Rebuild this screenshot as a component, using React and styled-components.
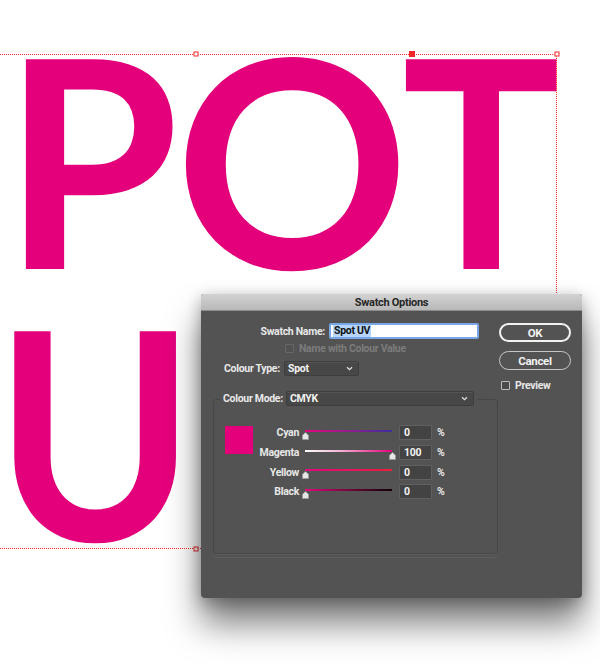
import React from 'react';
import styled, { createGlobalStyle } from 'styled-components';

const MAGENTA = '#e4007b';
const PANEL = '#535353';

const GlobalStyle = createGlobalStyle`
  html, body {
    margin: 0;
    padding: 0;
    background: #ffffff;
  }
  body {
    width: 600px;
    height: 666px;
    overflow: hidden;
  }
`;

const Canvas = styled.div`
  position: relative;
  width: 600px;
  height: 666px;
  overflow: hidden;
  background: #ffffff;
`;

// the artwork text on the page
const Artwork = styled.div`
  padding-top: 21px;
  font-family: Lato, 'Open Sans', sans-serif;
  font-weight: 700;
  font-size: 290px;
  line-height: 272px;
  color: ${MAGENTA};
  white-space: nowrap;
`;

const Line = styled.div`
  display: flex;
`;

const Glyph = styled.span`
  display: inline-block;
  width: ${p => p.$w}px;
  margin-left: ${p => p.$x || 0}px;
  transform: scaleX(${p => p.$sx || 1});
  transform-origin: left center;
`;

// selection frame of the text frame
const Frame = styled.div`
  position: absolute;
  top: 54px;
  left: -165px;
  width: 722px;
  height: 495px;
  border: 1px dotted #ff2a2a;
  box-sizing: border-box;
  pointer-events: none;
`;

const Handle = styled.span`
  position: absolute;
  left: ${p => p.$x}px;
  top: ${p => p.$y}px;
  width: ${p => (p.$filled ? 6 : 5)}px;
  height: ${p => (p.$filled ? 6 : 5)}px;
  transform: translate(-50%, -50%);
  box-sizing: border-box;
  border: 1px solid #f0262b;
  background: ${p => (p.$filled ? '#f0262b' : '#ffffff')};
`;

/* dialog */

const Dialog = styled.div`
  position: absolute;
  left: 201px;
  top: 294px;
  width: 381px;
  height: 304px;
  background: ${PANEL};
  border-radius: 3px 3px 4px 4px;
  box-shadow: 0 26px 34px rgba(0, 0, 0, 0.5), 0 4px 16px rgba(0, 0, 0, 0.3);
  font-family: Roboto, 'Liberation Sans', sans-serif;
  font-weight: 700;
  font-size: 10.5px;
  letter-spacing: -0.3px;
  color: #e8e8e8;
  overflow: hidden;
`;

const TitleBar = styled.div`
  height: 17px;
  box-sizing: border-box;
  display: flex;
  align-items: center;
  justify-content: center;
  background: linear-gradient(#d3d3d3, #b8b8b8);
  border-bottom: 1px solid #8c8c8c;
  color: #262626;
  font-size: 11px;
  padding-top: 1px;
`;

const Body = styled.div`
  display: flex;
`;

const Main = styled.div`
  width: 298px;
  display: flex;
  flex-direction: column;
`;

const Side = styled.div`
  display: flex;
  flex-direction: column;
  padding-top: 12px;
`;

const Row = styled.div`
  display: flex;
  align-items: center;
  margin-top: ${p => p.$top || 0}px;
  padding-left: ${p => p.$left || 0}px;
  height: ${p => p.$h || 16}px;
`;

const Label = styled.span`
  width: ${p => p.$w}px;
  text-align: ${p => (p.$right ? 'right' : 'left')};
  margin-right: ${p => p.$gap || 0}px;
  flex-shrink: 0;
  white-space: nowrap;
`;

const NameInput = styled.div`
  width: 150px;
  height: 16px;
  box-sizing: border-box;
  border: 2px solid #78a6e6;
  border-radius: 2px;
  background: #ffffff;
  display: flex;
  align-items: center;
  padding-left: 2px;
  color: #111111;
`;

const Selected = styled.span`
  background: #b5d5fd;
  line-height: 12px;
  padding: 0 1px;
`;

const Check = styled.span`
  width: 9px;
  height: 9px;
  box-sizing: border-box;
  border: 1px solid ${p => (p.$dim ? '#676767' : '#bdbdbd')};
  background: ${p => (p.$dim ? '#525252' : '#4a4a4a')};
  border-radius: 1px;
  margin-right: 5px;
  flex-shrink: 0;
`;

const Muted = styled.span`
  color: #7c7c7c;
`;

const Select = styled.div`
  width: ${p => p.$w}px;
  height: 15px;
  box-sizing: border-box;
  display: flex;
  align-items: center;
  justify-content: space-between;
  padding: 0 5px 0 3px;
  background: #474747;
  border: 1px solid #3d3d3d;
  border-radius: 2px;
  box-shadow: inset 0 1px 0 #545454;
  color: #f2f2f2;
`;

const Group = styled.div`
  margin: 23px 0 0 12px;
  width: 285px;
  height: 155px;
  box-sizing: border-box;
  border: 1px solid #474747;
  border-radius: 3px;
  box-shadow: 0 1px 0 #5a5a5a;
  display: flex;
  flex-direction: column;
`;

const ModeRow = styled.div`
  display: flex;
  align-items: center;
  align-self: flex-start;
  height: 15px;
  margin: -9px 0 0 6px;
  padding: 0 3px;
  background: ${PANEL};
`;

const Divider = styled.div`
  margin: 3px 0 0 14px;
  width: 281px;
  height: 1px;
  background: #5d5d5d;
`;

const MixArea = styled.div`
  display: flex;
  margin-top: 17px;
`;

const Swatch = styled.div`
  width: 28px;
  height: 28px;
  margin: 3px 0 0 11px;
  background: ${MAGENTA};
  flex-shrink: 0;
`;

const Sliders = styled.div`
  display: flex;
  flex-direction: column;
`;

const SliderRow = styled.div`
  display: flex;
  align-items: center;
  height: 19.7px;
`;

const Track = styled.div`
  position: relative;
  width: 87px;
  height: 100%;
  margin-left: 6px;
`;

const Bar = styled.div`
  position: absolute;
  left: 0;
  right: 0;
  top: 7px;
  height: 2px;
  background: ${p => p.$fill};
`;

const Thumb = styled.svg`
  position: absolute;
  top: 9px;
  margin-left: -3.5px;
`;

const Field = styled.div`
  width: 33px;
  height: 15px;
  box-sizing: border-box;
  margin-left: 7px;
  padding-left: 4px;
  display: flex;
  align-items: center;
  background: #434343;
  border: 1px solid #606060;
  border-radius: 1px;
  color: #f4f4f4;
`;

const Percent = styled.span`
  margin-left: 5px;
`;

const Button = styled.div`
  width: 72px;
  height: 19px;
  box-sizing: border-box;
  display: flex;
  align-items: center;
  justify-content: center;
  margin-top: ${p => p.$top || 0}px;
  border: ${p => (p.$default ? '2px solid #f2f2f2' : '1.5px solid #c6c6c6')};
  border-radius: 10px;
  color: #f2f2f2;
  font-size: 11.5px;
`;

const PreviewRow = styled.div`
  display: flex;
  align-items: center;
  margin: 9px 0 0 2px;
`;

const Chevron = () => (
  <svg width="7" height="5" viewBox="0 0 7 5">
    <path d="M1 1.2 L3.5 3.6 L6 1.2" fill="none" stroke="#e0e0e0" strokeWidth="1.3" />
  </svg>
);

const inks = [
  { name: 'Cyan', value: 0, fill: 'linear-gradient(90deg, #e5057f, #9a1a8c 45%, #3c2f9c)' },
  { name: 'Magenta', value: 100, fill: 'linear-gradient(90deg, #ffffff, #f3b5d5 40%, #e4007b)' },
  { name: 'Yellow', value: 0, fill: 'linear-gradient(90deg, #e5057f, #ea1d3d)' },
  { name: 'Black', value: 0, fill: 'linear-gradient(90deg, #e5057f, #6a0635 55%, #120008)' },
];

export default function App() {
  return (
    <Canvas>
      <GlobalStyle />
      <Artwork>
        <Line>
          <Glyph $w={172} $x={3} $sx={0.98}>P</Glyph>
          <Glyph $w={227}>O</Glyph>
          <Glyph $w={170} $sx={0.91}>T</Glyph>
        </Line>
        <Line>
          <Glyph $w={200} $x={-5} $sx={0.93}>U</Glyph>
        </Line>
      </Artwork>

      <Frame />
      <Handle $x={196} $y={54} />
      <Handle $x={412} $y={54} $filled />
      <Handle $x={557} $y={54} />
      <Handle $x={196} $y={549} />

      <Dialog>
        <TitleBar>Swatch Options</TitleBar>
        <Body>
          <Main>
            <Row $top={12}>
              <Label $w={124} $gap={4} $right>Swatch Name:</Label>
              <NameInput>
                <Selected>Spot UV</Selected>
              </NameInput>
            </Row>
            <Row $top={3} $left={84} $h={12}>
              <Check $dim />
              <Muted>Name with Colour Value</Muted>
            </Row>
            <Row $top={7} $left={23} $h={15}>
              <Label $w={60}>Colour Type:</Label>
              <Select $w={75}>
                <span>Spot</span>
                <Chevron />
              </Select>
            </Row>

            <Group>
              <ModeRow>
                <Label $w={60} $gap={3}>Colour Mode:</Label>
                <Select $w={188}>
                  <span>CMYK</span>
                  <Chevron />
                </Select>
              </ModeRow>
              <MixArea>
                <Swatch />
                <Sliders>
                  {inks.map(ink => (
                    <SliderRow key={ink.name}>
                      <Label $w={46} $right>{ink.name}</Label>
                      <Track>
                        <Bar $fill={ink.fill} />
                        <Thumb
                          width="7"
                          height="8"
                          viewBox="0 0 7 8"
                          style={{ left: `${ink.value}%` }}
                        >
                          <polygon
                            points="3.5,0.5 6.5,3.2 6.5,7.5 0.5,7.5 0.5,3.2"
                            fill="#e6e6e6"
                            stroke="#9a9a9a"
                            strokeWidth="0.8"
                          />
                        </Thumb>
                      </Track>
                      <Field>{ink.value}</Field>
                      <Percent>%</Percent>
                    </SliderRow>
                  ))}
                </Sliders>
              </MixArea>
            </Group>
            <Divider />
          </Main>

          <Side>
            <Button $default>OK</Button>
            <Button $top={9}>Cancel</Button>
            <PreviewRow>
              <Check />
              <span>Preview</span>
            </PreviewRow>
          </Side>
        </Body>
      </Dialog>
    </Canvas>
  );
}
